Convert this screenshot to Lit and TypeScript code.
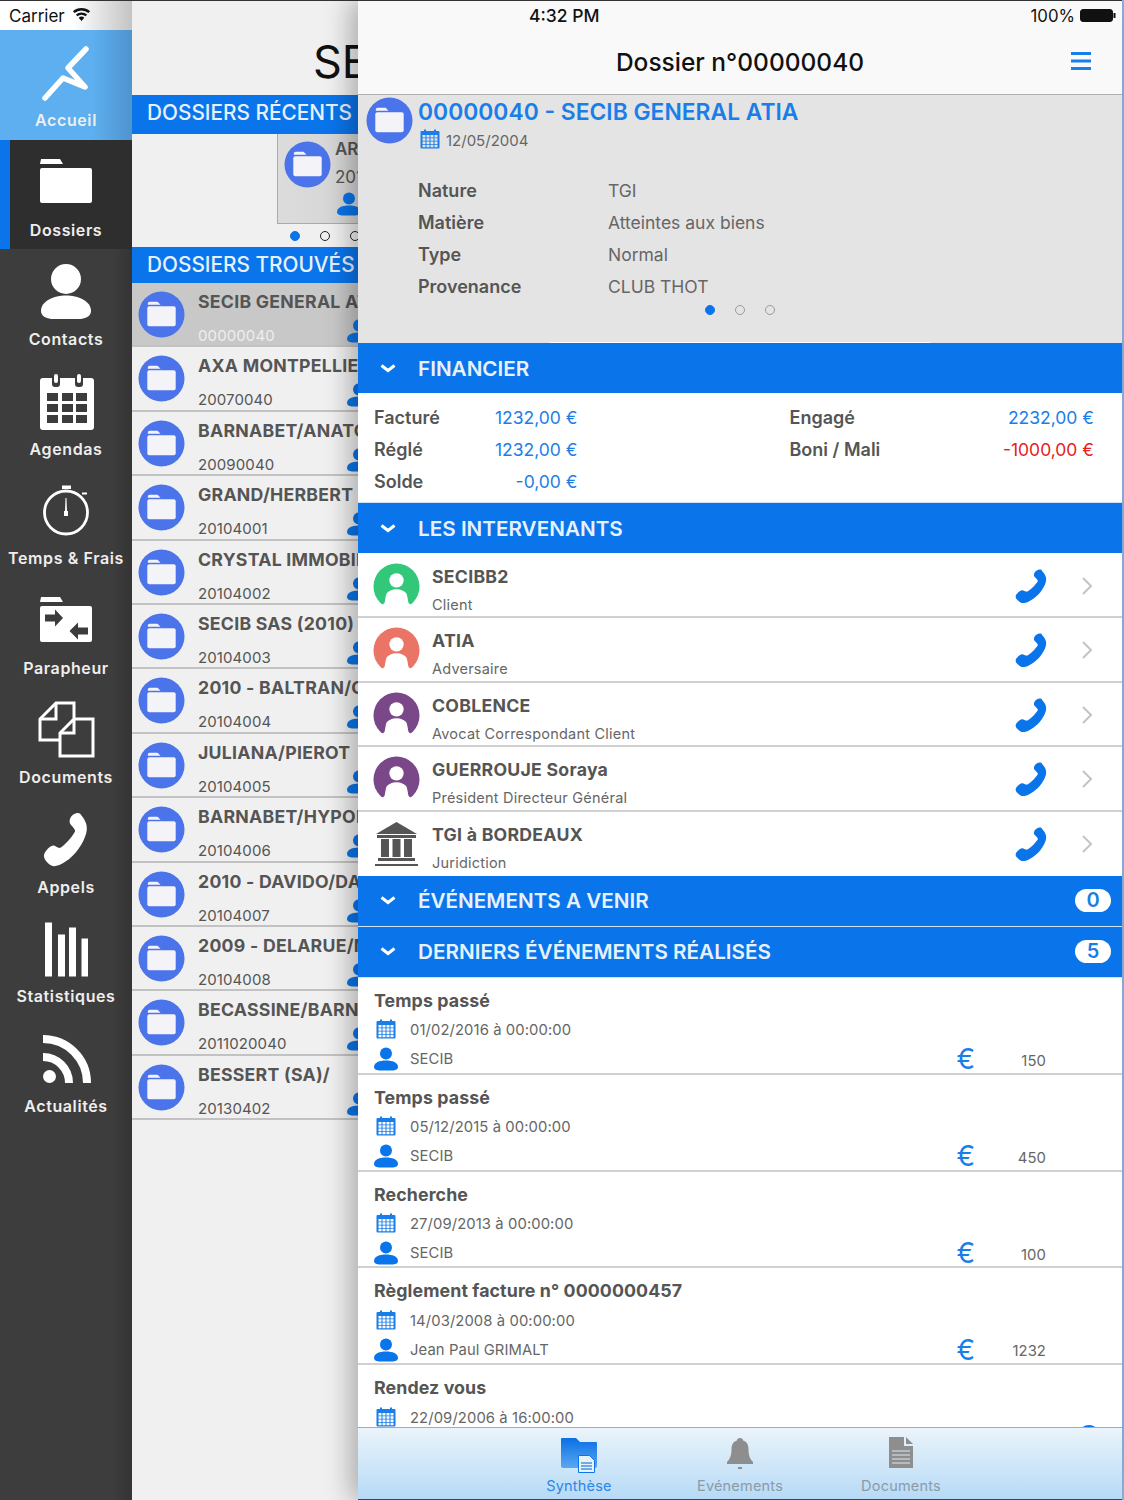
import { LitElement, html, css } from 'lit';
import { customElement } from 'lit/decorators.js';

const BLUE = '#0a74ea';

const folderIcon = () => html`<svg class="fold" viewBox="0 0 48 48">
  <circle cx="24" cy="24" r="23.5" fill="#4b73ea"></circle>
  <path d="M10 13q0-2 2-2h8l3 3h-13z" fill="#f4f4f8"></path>
  <rect x="9.5" y="15.5" width="29" height="20.5" rx="2" fill="#f4f4f8"></rect>
</svg>`;

const personIcon = () => html`<svg class="person" viewBox="0 0 24 24" fill=${BLUE}>
  <circle cx="12" cy="6.5" r="6"></circle>
  <path d="M0 20c0-4.5 5.5-6.5 12-6.5s12 2 12 6.5c0 2.500-3 3.500-6 3.500h-12c-3 0-6-1-6-3.500z"></path>
</svg>`;

// calendar body with a 4x4 grid of punched out cells
let calCells = '';
for (const y of [6, 9.25, 12.5, 15.75]) {
  for (const x of [2.5, 6.5, 10.5, 14.5]) calCells += ` M${x} ${y}v2.5h3v-2.5z`;
}
const CAL = `M1.5 2h2.5v-1.5h2v1.5h8v-1.5h2v1.5h2.500a1 1 0 0 1 1 1v15.500a1 1 0 0 1-1 1h-17a1 1 0 0 1-1-1v-15.500a1 1 0 0 1 1-1z${calCells}`;

const calIcon = () => html`<svg class="cal" viewBox="0 0 20 20"><path fill-rule="evenodd" fill="#1a7ee8" d=${CAL}></path></svg>`;

const PHONE = 'M16 1.200C18 .2 19.5 0 20.500 1.500 23 4 24 6.500 23 9.500 21.500 14 17.500 19 12 22 9 23.800 6 24.500 4.500 23.800 2.500 22.800.5 21 .5 19.500.5 18 3 15.500 5 15 6.500 14.600 8 16.500 9.500 15.800 12 14.500 15.500 11 17 8.800 17.800 7.500 14.500 6 14.200 4.500 14 3.200 15 1.800 16 1.200z';

const navIcons: Record<string, unknown> = {
  home: html`<svg class="nav-ic" viewBox="0 0 64 64"><path d="M52 9 34 28 51 47 29 38 11 58" fill="none" stroke="#fff" stroke-width="5.5" stroke-linecap="round" stroke-linejoin="round"></path></svg>`,
  folder: html`<svg class="nav-ic" viewBox="0 0 64 64"><g fill="#fff"><path d="M7 9h19l3 5H6z"></path><rect x="6" y="18" width="52" height="35" rx="2"></rect></g></svg>`,
  contact: html`<svg class="nav-ic" viewBox="0 0 64 64"><g fill="#fff"><circle cx="32" cy="20" r="15"></circle><path d="M7 52C7 42 20 36.500 32 36.500S57 42 57 52C57 58 50 60 45 60H19C14 60 7 58 7 52z"></path></g></svg>`,
  agenda: html`<svg class="nav-ic" viewBox="0 0 64 64">
    <rect x="6" y="9" width="54" height="52" rx="3" fill="#fff"></rect>
    <g fill="#3c3c3c">
      <rect x="18" y="5" width="8" height="13" rx="3"></rect><rect x="41" y="5" width="8" height="13" rx="3"></rect>
      <rect x="13" y="24" width="11" height="8"></rect><rect x="28" y="24" width="11" height="8"></rect><rect x="42" y="24" width="11" height="8"></rect>
      <rect x="13" y="35" width="11" height="8"></rect><rect x="28" y="35" width="11" height="8"></rect><rect x="42" y="35" width="11" height="8"></rect>
      <rect x="13" y="46" width="11" height="8"></rect><rect x="28" y="46" width="11" height="8"></rect><rect x="42" y="46" width="11" height="8"></rect>
    </g>
    <g fill="#fff"><rect x="20" y="5" width="4" height="9" rx="2"></rect><rect x="43" y="5" width="4" height="9" rx="2"></rect></g>
  </svg>`,
  timer: html`<svg class="nav-ic" viewBox="0 0 64 64">
    <circle cx="32" cy="34.500" r="21.500" fill="none" stroke="#fff" stroke-width="2.800"></circle>
    <g fill="#fff"><rect x="28" y="7.500" width="9" height="3.500"></rect><rect x="48" y="14.500" width="5" height="2"></rect><path d="M31.500 20h1l.5 13h1v5h-4v-5h1z"></path></g>
  </svg>`,
  sign: html`<svg class="nav-ic" viewBox="0 0 64 64">
    <path fill="#fff" d="M7 9h19l3 5H6z"></path>
    <rect x="6" y="18" width="52" height="36" rx="2" fill="#fff"></rect>
    <path fill="#3c3c3c" d="M11 26.500h10v-5l8 8.500-8 8.500v-5h-10z M54 39.500h-10v-5l-8.500 8.500 8.500 8.500v-5h10z"></path>
  </svg>`,
  docs: html`<svg class="nav-ic" viewBox="0 0 64 64"><g fill="none" stroke="#fff" stroke-width="3"><path d="M26 43H6V22L22 6H40V21"></path><path d="M6 22H22V6"></path><path d="M26 59V36L40 22H59V59Z"></path><path d="M26 36H40V22"></path></g></svg>`,
  phone: html`<svg class="nav-ic" viewBox="0 0 64 64"><path fill="#fff" transform="translate(9 5) scale(1.875 2.250)" d=${PHONE}></path></svg>`,
  stats: html`<svg class="nav-ic" viewBox="0 0 64 64"><g fill="#fff"><rect x="11" y="6.500" width="7" height="54"></rect><rect x="24" y="18.500" width="7" height="42"></rect><rect x="35" y="11.500" width="7" height="49"></rect><rect x="47.500" y="22.500" width="6.500" height="38"></rect></g></svg>`,
  rss: html`<svg class="nav-ic" viewBox="0 0 64 64"><circle cx="15.500" cy="50.500" r="6.500" fill="#fff"></circle><g fill="none" stroke="#fff" stroke-width="8"><path d="M9 13A44 44 0 0 1 53 57"></path><path d="M9 31A26 26 0 0 1 35 57"></path></g></svg>`,
};

const NAV = [
  ['home', 'Accueil'], ['folder', 'Dossiers'], ['contact', 'Contacts'], ['agenda', 'Agendas'],
  ['timer', 'Temps & Frais'], ['sign', 'Parapheur'], ['docs', 'Documents'], ['phone', 'Appels'],
  ['stats', 'Statistiques'], ['rss', 'Actualités'],
];

const FOUND = [
  ['SECIB GENERAL ATIA', '00000040'], ['AXA MONTPELLIER', '20070040'], ['BARNABET/ANATOLE', '20090040'],
  ['GRAND/HERBERT', '20104001'], ['CRYSTAL IMMOBILIER', '20104002'], ['SECIB SAS (2010)', '20104003'],
  ['2010 - BALTRAN/COLIN', '20104004'], ['JULIANA/PIEROT', '20104005'], ['BARNABET/HYPOLITE', '20104006'],
  ['2010 - DAVIDO/DANIEL', '20104007'], ['2009 - DELARUE/MARTIN', '20104008'], ['BECASSINE/BARNABET', '2011020040'],
  ['BESSERT (SA)/', '20130402'],
];

const PEOPLE = [
  ['SECIBB2', 'Client', '#33c77a'], ['ATIA', 'Adversaire', '#ea7465'],
  ['COBLENCE', 'Avocat Correspondant Client', '#7a4789'],
  ['GUERROUJE Soraya', 'Président Directeur Général', '#7a4789'],
  ['TGI à BORDEAUX', 'Juridiction', ''],
];

const EVENTS = [
  ['Temps passé', '01/02/2016 à 00:00:00', 'SECIB', '150'],
  ['Temps passé', '05/12/2015 à 00:00:00', 'SECIB', '450'],
  ['Recherche', '27/09/2013 à 00:00:00', 'SECIB', '100'],
  ['Règlement facture n° 0000000457', '14/03/2008 à 00:00:00', 'Jean Paul GRIMALT', '1232'],
  ['Rendez vous', '22/09/2006 à 16:00:00', 'SECIB', '80'],
];

@customElement('app-root')
export class AppRoot extends LitElement {
  static styles = css`
    :host {
      display: flex;
      width: 1124px;
      height: 1500px;
      overflow: hidden;
      background: #8fb4e4;
      font-family: Inter, "Noto Sans", sans-serif;
      color: #555;
    }

    /* status bar */
    .status {
      height: 30px;
      display: flex;
      align-items: center;
      font-size: 17px;
      color: #111;
      box-sizing: border-box;
      border-top: 1px solid #333;
      flex: none;
    }

    /* left nav */
    .side {
      width: 132px;
      flex: none;
      background: linear-gradient(to right, #3d3d3d 85%, #343434);
    }
    .side .status {
      background: linear-gradient(to right, #fff 55%, #c4c4c4);
      padding-left: 9px;
      gap: 7px;
    }
    .wifi { width: 19px; height: 14px; margin-top: -3px; }
    .item {
      height: 109.5px;
      box-sizing: border-box;
      padding-top: 10px;
      display: flex;
      flex-direction: column;
      align-items: center;
      color: #eee;
      font-size: 16px;
      font-weight: 600;
      line-height: 32px;
      letter-spacing: 0.6px;
      white-space: nowrap;
    }
    .item.home {
      background: linear-gradient(to right, #5dafef 70%, #4f94cf);
    }
    .item.active {
      background: #2e2e2e;
      border-left: 10px solid #0a74ea;
      padding-right: 10px;
    }
    .nav-ic { width: 64px; height: 64px; flex: none; }

    /* middle list, slides under the panel */
    .middle {
      width: 226px;
      flex: none;
      background: #f0f0f0;
      overflow: hidden;
    }
    .mid-head {
      height: 95px;
      box-sizing: border-box;
      border-top: 1px solid #333;
      padding: 38px 0 0 181px;
      font-size: 45px;
      line-height: 46px;
      color: #111;
      white-space: nowrap;
    }
    .mid-band {
      background: #0a74ea;
      color: #e6f1fc;
      font-size: 20.8px;
      font-weight: 500;
      padding-left: 15px;
      white-space: nowrap;
      display: flex;
      align-items: center;
      box-sizing: border-box;
    }
    .mid-band.tall { height: 39px; padding-bottom: 5px; }
    .mid-band.short { height: 36px; padding-bottom: 2px; }
    .recent { height: 113px; box-sizing: border-box; }
    .recent-card {
      margin-left: 145px;
      width: 200px;
      height: 90px;
      box-sizing: border-box;
      border: 1px solid #aaa;
      border-top: 0;
      background: linear-gradient(to right, #dcdcdc, #c8c8c8);
      display: flex;
      padding: 7px 0 0 6px;
      gap: 4px;
    }
    .fold { width: 47px; height: 47px; flex: none; }
    .recent-text { font-size: 17px; line-height: 28px; white-space: nowrap; margin-top: -6px; }
    .recent-text b { font-weight: 600; display: block; }
    .recent-text .person { display: block; margin: 1px 0 0 2px; }
    .person { width: 24px; height: 24px; flex: none; }
    .dots { display: flex; align-items: center; }
    .dots span {
      width: 10px;
      height: 10px;
      flex: none;
      border-radius: 50%;
      box-sizing: border-box;
      border: 1.5px solid #222;
    }
    .dots span.on { background: #0a74ea; border-color: #0a74ea; }
    .recent .dots { margin: 7px 0 0 158px; gap: 20px; }

    .row {
      height: 64.4px;
      box-sizing: border-box;
      border-bottom: 2px solid #c2c2c2;
      display: flex;
      padding: 8px 0 0 6px;
    }
    .row.sel { background: #c8c8c8; }
    .row-text { margin: -1px 0 0 13px; width: 173px; flex: none; }
    .row-name {
      font-size: 17.7px;
      font-weight: 700;
      line-height: 24px;
      white-space: nowrap;
      overflow: hidden;
      letter-spacing: 0.25px;
    }
    .row-meta {
      display: flex;
      justify-content: space-between;
      align-items: flex-end;
      font-size: 15px;
      line-height: 20px;
      margin-top: 7px;
      height: 22px;
    }
    .row-meta span { margin-bottom: -3px; letter-spacing: 0.1px; }
    .row.sel .row-meta { color: #eee; }

    /* detail panel */
    .panel {
      width: 764px;
      height: 1500px;
      flex: none;
      display: flex;
      flex-direction: column;
      background: #fff;
      box-shadow: -8px 0 24px rgba(0, 0, 0, 0.28);
      z-index: 1;
    }
    .panel .status {
      background: #f9f9f9;
      justify-content: space-between;
      padding: 0 6px 0 171px;
    }
    .time { font-weight: 500; font-size: 17.5px; }
    .batt { display: flex; align-items: center; gap: 5px; font-size: 16.8px; }
    .batt svg { width: 36px; height: 13px; }
    .nav {
      height: 65px;
      flex: none;
      box-sizing: border-box;
      background: #f9f9f9;
      border-bottom: 1px solid #b0b0b0;
      display: flex;
      align-items: center;
      justify-content: center;
      font-size: 24.5px;
      font-weight: 500;
      color: #111;
      position: relative;
    }
    .menu { position: absolute; right: 31px; top: 22px; width: 20px; height: 18px; }
    .scroll { flex: 1; overflow: hidden; min-height: 0; }
    .head {
      height: 248px;
      box-sizing: border-box;
      background: #e4e4e4;
      padding: 2px 0 0 8px;
      display: flex;
      flex-direction: column;
    }
    .head-top { display: flex; gap: 5px; height: 77px; }
    .title { font-size: 22.85px; font-weight: 600; color: #1a7ee8; line-height: 30px; white-space: nowrap; }
    .date {
      display: flex;
      align-items: center;
      gap: 6px;
      font-size: 15px;
      color: #666;
      height: 20px;
      margin: 3px 0 0 2px;
    }
    .cal { width: 20px; height: 20px; flex: none; margin-top: -2px; }
    .facts {
      display: grid;
      grid-template-columns: 190px 1fr;
      grid-auto-rows: 32px;
      align-items: center;
      margin-left: 52px;
      font-size: 17.5px;
    }
    .facts b, .fin b { font-weight: 600; color: #555; font-size: 18px; }
    .facts span { color: #666; }
    .head .dots { justify-content: center; gap: 20px; margin: 3px 0 0 -8px; }
    .head .dots span { border-color: #999; }
    .head .dots span.on { border-color: #0a74ea; }
    .rule { margin: auto 192px 0 184px; height: 1px; background: #fff; }

    .band {
      height: 50px;
      box-sizing: border-box;
      background: #0a74ea;
      color: #e6f1fc;
      font-size: 20.7px;
      font-weight: 600;
      display: flex;
      align-items: center;
      padding: 0 11px 0 22px;
    }
    .band.sep { height: 51px; border-top: 1px solid #cfe2f6; }
    .band.close { height: 52px; border-bottom: 1px solid #cfe2f6; }
    .chev { width: 16px; height: 9px; margin-right: 22px; flex: none; }
    .pill {
      margin-left: auto;
      width: 36px;
      height: 23px;
      border-radius: 12px;
      background: #fff;
      color: #1a7ee8;
      font-weight: 600;
      font-size: 20px;
      line-height: 23px;
      text-align: center;
    }

    .fin {
      height: 109px;
      box-sizing: border-box;
      padding: 8px 27px 0 16px;
      display: grid;
      grid-template-columns: 203.5px 304.5px;
      column-gap: 212px;
      grid-auto-rows: 32px;
      font-size: 17.5px;
    }
    .fin div { display: flex; justify-content: space-between; align-items: center; }
    .fin em { font-style: normal; color: #1a7ee8; }
    .fin em.neg { color: #e8201c; }

    .who-list { padding-top: 1px; }
    .who {
      height: 64.4px;
      box-sizing: border-box;
      border-bottom: 2px solid #d0d0d0;
      display: flex;
      align-items: flex-start;
      padding: 9px 0 0 15px;
    }
    .who.end { border-bottom: 0; }
    .ava { width: 47px; height: 47px; flex: none; }
    .who-text { margin: 2px 0 0 12px; flex: 1; }
    .who-name { font-size: 17.7px; font-weight: 700; line-height: 24px; letter-spacing: 0.25px; }
    .who-role { font-size: 14.5px; line-height: 20px; margin-top: 6px; color: #666; letter-spacing: 0.22px; }
    .tel { width: 32px; height: 34px; margin: 6px 0 0 0; flex: none; }
    .go { width: 12px; height: 20px; margin: 13px 29px 0 34px; flex: none; }

    .ev {
      height: 96.8px;
      box-sizing: border-box;
      border-bottom: 2px solid #d0d0d0;
      padding: 11px 76px 0 16px;
      overflow: hidden;
      position: relative;
    }
    .ev.end::after {
      content: "";
      position: absolute;
      left: 720px;
      top: 60px;
      width: 22px;
      height: 22px;
      border-radius: 50%;
      background: #0a74ea;
    }
    .ev-title { font-size: 17.8px; font-weight: 700; line-height: 24px; letter-spacing: 0.1px; }
    .ev-line {
      display: flex;
      align-items: center;
      height: 29px;
      font-size: 14.8px;
      color: #666;
      letter-spacing: 0.1px;
    }
    .ev-ic { width: 24px; margin-right: 12px; display: flex; justify-content: center; flex: none; }
    .ev-line.first { margin-top: 3px; }
    .euro { margin-left: auto; width: 20px; color: #1a7ee8; font-size: 28px; line-height: 28px; font-weight: 400; text-align: center; }
    .amount { width: 70px; text-align: right; padding-top: 3px; }

    .tabs {
      height: 73px;
      flex: none;
      box-sizing: border-box;
      border-top: 1px solid #aaa;
      border-bottom: 1px solid #33485a;
      background: linear-gradient(to bottom, #ebf4fb, #b6daf6);
      display: grid;
      grid-template-columns: repeat(3, 161px);
      justify-content: center;
    }
    .tab {
      display: flex;
      flex-direction: column;
      align-items: center;
      font-size: 14.5px;
      color: #8b9aa8;
      padding-top: 8px;
      letter-spacing: 0.2px;
    }
    .tab svg { width: 38px; height: 38px; flex: none; }
    .tab span { line-height: 18px; margin-top: 3px; }
    .tab.on { color: #2a86e8; }
  `;

  avatar(color: string) {
    if (!color) {
      return html`<svg class="ava" viewBox="0 0 47 47" fill="#555">
        <path d="M23.5 1 44 13H3z"></path>
        <rect x="4" y="14" width="39" height="3"></rect>
        <rect x="8" y="18" width="8" height="18"></rect><rect x="19.5" y="18" width="8" height="18"></rect><rect x="31" y="18" width="8" height="18"></rect>
        <rect x="5" y="37" width="37" height="3"></rect>
        <rect x="2" y="43" width="43" height="2"></rect>
      </svg>`;
    }
    return html`<svg class="ava" viewBox="0 0 48 48">
      <circle cx="24" cy="24" r="23.5" fill=${color}></circle>
      <circle cx="24" cy="17.7" r="7.3" fill="#fff"></circle>
      <path d="M0 50V42H10.500L12 40Q13 33 14 31 17 27 24 26.700 31 27 34 31 35 33 36 40L37.500 42H48V50Z" fill="#fff"></path>
    </svg>`;
  }

  renderSide() {
    return html`<div class="side">
      <div class="status">Carrier
        <svg class="wifi" viewBox="0 0 19 14"><path fill="#111" d="M9.500 14 6.700 10.800a4 4 0 0 1 5.600 0zM5.400 9.300 3.900 7.600a8.500 8.500 0 0 1 11.200 0L13.600 9.300a6.200 6.200 0 0 0-8.200 0zM2.600 6.100.9 4.200a13 13 0 0 1 17.200 0L16.400 6.100a10.500 10.500 0 0 0-13.800 0z"></path></svg>
      </div>
      ${NAV.map(([ic, label], i) => html`
        <div class="item ${i === 0 ? 'home' : ''} ${i === 1 ? 'active' : ''}">
          ${navIcons[ic]}<span>${label}</span>
        </div>`)}
    </div>`;
  }

  renderMiddle() {
    return html`<div class="middle">
      <div class="mid-head">SECIB</div>
      <div class="mid-band tall">DOSSIERS RÉCENTS</div>
      <div class="recent">
        <div class="recent-card">
          ${folderIcon()}
          <div class="recent-text"><b>ARCHIVES</b>2012${personIcon()}</div>
        </div>
        <div class="dots"><span class="on"></span><span></span><span></span></div>
      </div>
      <div class="mid-band short">DOSSIERS TROUVÉS</div>
      ${FOUND.map(([name, num], i) => html`
        <div class="row ${i === 0 ? 'sel' : ''}">
          ${folderIcon()}
          <div class="row-text">
            <div class="row-name">${name}</div>
            <div class="row-meta"><span>${num}</span>${personIcon()}</div>
          </div>
        </div>`)}
    </div>`;
  }

  band(label: string, count?: number, cls = '') {
    return html`<div class="band ${cls}">
      <svg class="chev" viewBox="0 0 16 9"><path d="M1.500 1.500 8 6.500l6.500-5" fill="none" stroke="#fff" stroke-width="3"></path></svg>
      ${label}
      ${count !== undefined ? html`<span class="pill">${count}</span>` : ''}
    </div>`;
  }

  renderPanel() {
    return html`<div class="panel">
      <div class="status">
        <span class="time">4:32 PM</span>
        <span class="batt">100%
          <svg viewBox="0 0 36 13"><rect x=".5" y=".5" width="32" height="12" rx="2.500" fill="#111" stroke="#111"></rect><rect x="33.500" y="4" width="2" height="5" fill="#111"></rect></svg>
        </span>
      </div>
      <div class="nav">Dossier n°00000040
        <svg class="menu" viewBox="0 0 20 18"><path d="M0 1.500h20M0 9h20M0 16.500h20" stroke="#1a7ee8" stroke-width="3"></path></svg>
      </div>
      <div class="scroll">
        <div class="head">
          <div class="head-top">
            ${folderIcon()}
            <div>
              <div class="title">00000040 - SECIB GENERAL ATIA</div>
              <div class="date">${calIcon()}12/05/2004</div>
            </div>
          </div>
          <div class="facts">
            <b>Nature</b><span>TGI</span>
            <b>Matière</b><span>Atteintes aux biens</span>
            <b>Type</b><span>Normal</span>
            <b>Provenance</b><span>CLUB THOT</span>
          </div>
          <div class="dots"><span class="on"></span><span></span><span></span></div>
          <div class="rule"></div>
        </div>
        ${this.band('FINANCIER')}
        <div class="fin">
          <div><b>Facturé</b><em>1232,00 €</em></div>
          <div><b>Engagé</b><em>2232,00 €</em></div>
          <div><b>Réglé</b><em>1232,00 €</em></div>
          <div><b>Boni / Mali</b><em class="neg">-1000,00 €</em></div>
          <div><b>Solde</b><em>-0,00 €</em></div>
        </div>
        ${this.band('LES INTERVENANTS', undefined, 'sep')}
        <div class="who-list">
          ${PEOPLE.map(([name, role, color], i) => html`
            <div class="who ${i === PEOPLE.length - 1 ? 'end' : ''}">
              ${this.avatar(color)}
              <div class="who-text">
                <div class="who-name">${name}</div>
                <div class="who-role">${role}</div>
              </div>
              <svg class="tel" viewBox="0 0 24 24" preserveAspectRatio="none"><path fill=${BLUE} d=${PHONE}></path></svg>
              <svg class="go" viewBox="0 0 12 20"><path d="M2 2l8 8-8 8" fill="none" stroke="#c4c4c4" stroke-width="2"></path></svg>
            </div>`)}
        </div>
        ${this.band('ÉVÉNEMENTS A VENIR', 0)}
        ${this.band('DERNIERS ÉVÉNEMENTS RÉALISÉS', 5, 'sep close')}
        ${EVENTS.map(([title, when, who, amount], i) => html`
          <div class="ev ${i === EVENTS.length - 1 ? 'end' : ''}">
            <div class="ev-title">${title}</div>
            <div class="ev-line first"><span class="ev-ic">${calIcon()}</span>${when}</div>
            <div class="ev-line"><span class="ev-ic">${personIcon()}</span>${who}
              <span class="euro">€</span><span class="amount">${amount}</span>
            </div>
          </div>`)}
      </div>
      <div class="tabs">
        <div class="tab on">
          <svg viewBox="0 0 38 38">
            <defs><linearGradient id="tf" x1="0" y1="0" x2="0" y2="1"><stop offset="0" stop-color="#0a6fe6"></stop><stop offset="1" stop-color="#5aa8f0"></stop></linearGradient></defs>
            <path fill="url(#tf)" d="M1 3q0-1 1-1h14l4 4h16q1 0 1 1v23q0 2-2 2H3q-2 0-2-2z"></path>
            <path fill="#e8f2fb" stroke="#0a74ea" d="M18.500 19.500h11l5 5v12h-16z"></path>
            <path stroke="#4a90e0" stroke-width="1.500" d="M21 27h11M21 30h11M21 33h11"></path>
          </svg>
          <span>Synthèse</span>
        </div>
        <div class="tab">
          <svg viewBox="0 0 38 38"><path fill="#8e8e8e" d="M19 2c2 0 3 1 3 2.500 4 1 5.500 4.500 5.500 9 0 6 1.500 9.500 4.500 12.500v2H6v-2c3-3 4.500-6.500 4.500-12.500 0-4.500 1.500-8 5.500-9C16 3 17 2 19 2zM17 31h4v2h-4z"></path></svg>
          <span>Evénements</span>
        </div>
        <div class="tab">
          <svg viewBox="0 0 38 38"><path fill="#8e8e8e" d="M7 1h15v9h9v22H7z M24 1l7 7h-7z"></path><path stroke="#dbe9f5" d="M10 15h18M10 19h18M10 23h18M10 27h18"></path></svg>
          <span>Documents</span>
        </div>
      </div>
    </div>`;
  }

  render() {
    return html`${this.renderSide()}${this.renderMiddle()}${this.renderPanel()}`;
  }
}
